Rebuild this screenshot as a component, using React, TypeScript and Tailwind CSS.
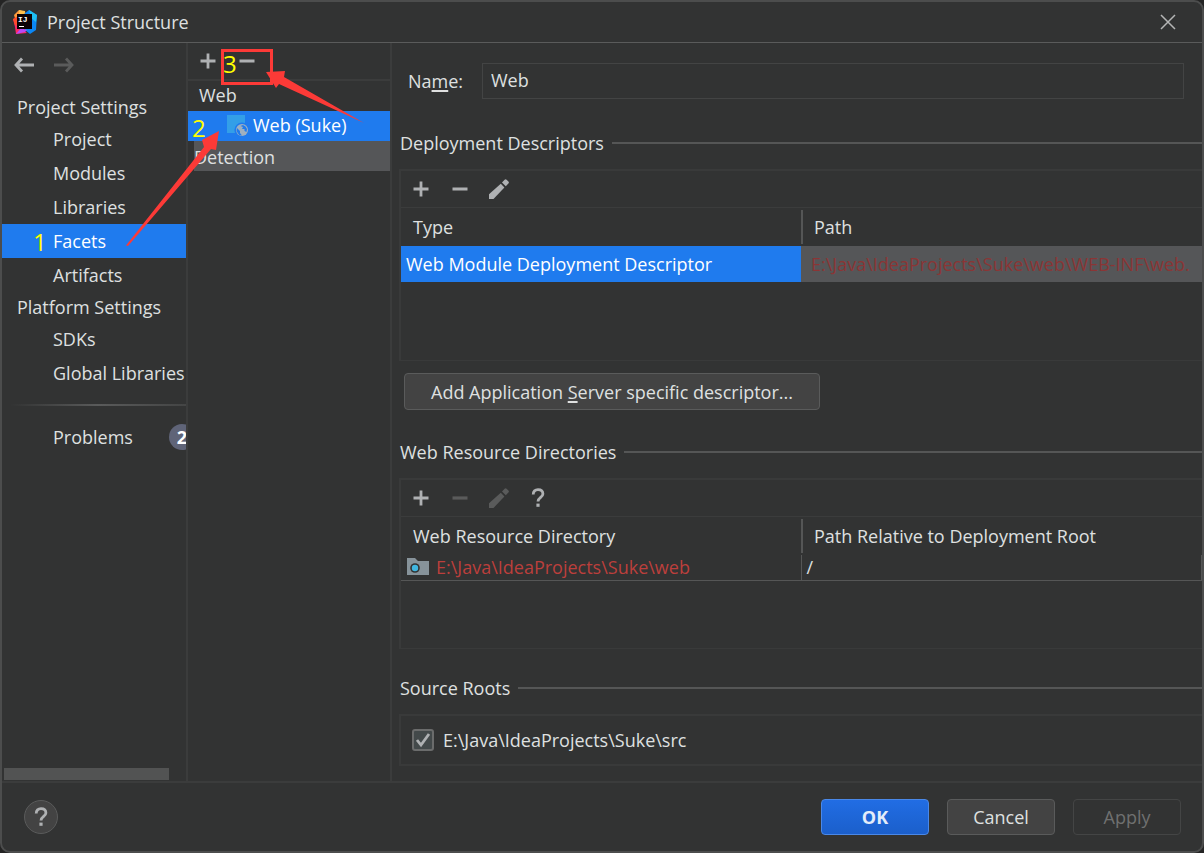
import { useState } from "react";
import type { ReactNode } from "react";

interface NavItem {
    id: string;
    label: string;
}

const PROJECT_SETTINGS: NavItem[] = [
    { id: "project", label: "Project" },
    { id: "modules", label: "Modules" },
    { id: "libraries", label: "Libraries" },
    { id: "facets", label: "Facets" },
    { id: "artifacts", label: "Artifacts" },
];

const PLATFORM_SETTINGS: NavItem[] = [
    { id: "sdks", label: "SDKs" },
    { id: "global-libraries", label: "Global Libraries" },
];

/* ---------- icons ---------- */

function IdeaLogo() {
    return (
        <svg viewBox="0 0 24 24" className="w-6 h-6 shrink-0" aria-hidden="true">
            <polygon points="1,5 6,0 12,2 11,14 3,12" fill="#ff9a3c" />
            <polygon points="6,0 12,1 13,8 6,9" fill="#fdc04e" />
            <polygon points="0,9 6,8 8,18 14,23 3,24 2,17" fill="#fe2868" />
            <polygon points="0,9 5,6 6,16 2,15" fill="#ff4b2b" />
            <polygon points="11,4 16,0 24,5 23,20 17,24 12,20" fill="#0b87f5" />
            <polygon points="16,0 24,5 23,12 18,8" fill="#1ec0f2" />
            <polygon points="3,24 8,18 14,20 12,22" fill="#b74af7" />
            <rect x="4" y="4" width="15" height="15" fill="#0a0206" />
            <text x="5" y="12" fontSize="8" fontWeight="bold" fontFamily="Liberation Mono, monospace" fill="#fff">
                IJ
            </text>
            <rect x="6" y="16" width="5" height="1" fill="#fff" />
        </svg>
    );
}

function ArrowIcon({ flipped = false }: { flipped?: boolean }) {
    return (
        <svg viewBox="0 0 20 16" className={flipped ? "w-5 h-4 -scale-x-100" : "w-5 h-4"} aria-hidden="true">
            <path d="M8 1.5 2 8l6 6.500M2 8h18" fill="none" stroke="currentColor" strokeWidth="2.8" />
        </svg>
    );
}

function PlusIcon() {
    return (
        <svg viewBox="0 0 16 16" className="w-4 h-4" aria-hidden="true">
            <path d="M8 0.500v15M0.500 8h15" stroke="currentColor" strokeWidth="2.800" />
        </svg>
    );
}

function MinusIcon() {
    return (
        <svg viewBox="0 0 16 16" className="w-4 h-4" aria-hidden="true">
            <path d="M0.500 8h15" stroke="currentColor" strokeWidth="3.200" />
        </svg>
    );
}

function PencilIcon() {
    return (
        <svg viewBox="0 0 20 20" className="w-5 h-5" fill="currentColor" aria-hidden="true">
            <path d="M0 15.200 11.800 4.800l3.600 3.600L4.500 20H0z" />
            <path d="m13 3.600 2.600-2.800q1-1 2 0l1.800 1.800q1 1 0 2l-2.600 2.600z" />
        </svg>
    );
}

function QuestionIcon() {
    return (
        <svg viewBox="0 0 14 20" className="w-[14px] h-5" aria-hidden="true">
            <path
                d="M2.200 6.400C2.200 3.200 4.200 1.700 7 1.700s4.900 1.500 4.900 4.200c0 3.300-4.900 3.600-4.900 7.600"
                fill="none"
                stroke="currentColor"
                strokeWidth="2.800"
            />
            <rect x="5.400" y="15.600" width="3.200" height="3.200" fill="currentColor" />
        </svg>
    );
}

function WebFacetIcon() {
    return (
        <svg viewBox="0 0 22 22" className="w-[22px] h-[22px] shrink-0" aria-hidden="true">
            <rect y="1" width="18" height="18" fill="#339fe8" />
            <circle cx="15" cy="16" r="7.600" fill="#1f7bee" />
            <circle cx="15" cy="16" r="6" fill="#9fb0bf" />
            <path d="m10 14 3 3v2l2 2.500-3-.5-2.500-4zM13.500 12l2.500 1-1 2h2.500v2l2 1 .5-3-1.500-2.500-2.500-1.500z" fill="#1f7bee" />
        </svg>
    );
}

function WebFolderIcon() {
    return (
        <svg viewBox="0 0 22 18" className="w-[22px] h-[18px] shrink-0" aria-hidden="true">
            <path d="M0 0h8l3 3h11v14H0z" fill="#87939a" />
            <circle cx="8" cy="10" r="4.800" fill="#323333" />
            <circle cx="8" cy="10" r="3.200" fill="#40b6e0" />
        </svg>
    );
}

/* ---------- building blocks ---------- */

interface ToolButtonProps {
    label: string;
    disabled?: boolean;
    children: ReactNode;
}

function ToolButton({ label, disabled, children }: ToolButtonProps) {
    return (
        <button
            type="button"
            aria-label={label}
            disabled={disabled}
            className="flex items-center justify-center w-5 h-5 text-[#afb1b3] disabled:text-[#5a5b5b]"
        >
            {children}
        </button>
    );
}

function NavGroup({ title, items, active, onSelect }: {
    title: string;
    items: NavItem[];
    active: string;
    onSelect: (id: string) => void;
}) {
    return (
        <section>
            <h2 className="h-[30px] pl-[15px] leading-[30px] whitespace-nowrap">{title}</h2>
            {items.map((item) => (
                <button
                    key={item.id}
                    type="button"
                    onClick={() => onSelect(item.id)}
                    className={
                        item.id === active
                            ? "block w-full h-[34px] pl-[51px] text-left whitespace-nowrap bg-[#1f7bee] text-white"
                            : "block w-full h-[34px] pl-[51px] text-left whitespace-nowrap"
                    }
                >
                    {item.label}
                </button>
            ))}
        </section>
    );
}

function SectionTitle({ children }: { children: ReactNode }) {
    return (
        <div className="flex items-center gap-2 h-[26px] pl-px">
            <h2 className="whitespace-nowrap">{children}</h2>
            <span className="flex-1 h-[2px] bg-[#555656]" />
        </div>
    );
}

function HeaderCell({ divided, children }: { divided?: boolean; children: ReactNode }) {
    return (
        <th scope="col" className={divided ? "h-[38px] p-0 text-left font-normal whitespace-nowrap" : "w-[400px] h-[38px] p-0 text-left font-normal whitespace-nowrap"}>
            <div className={divided ? "h-[34px] pl-[11px] leading-[34px] border-l-2 border-[#555656]" : "pl-3"}>
                {children}
            </div>
        </th>
    );
}

function FacetTree() {
    return (
        <div className="w-[204px] shrink-0 border-r-2 border-[#3b3c3c]">
            <div className="flex items-center gap-[19px] h-[38px] pl-[10px] border-b-2 border-[#3b3c3c]">
                <ToolButton label="Add facet"><PlusIcon /></ToolButton>
                <ToolButton label="Remove facet"><MinusIcon /></ToolButton>
            </div>
            <button type="button" className="block w-full h-[30px] pl-[11px] pb-[2px] text-left">Web</button>
            <button type="button" className="flex items-center gap-1 w-full h-[30px] pl-[39px] pb-[2px] bg-[#1f7bee] text-white">
                <WebFacetIcon />
                <span>Web (Suke)</span>
            </button>
            <div className="pl-[6px]">
                <button type="button" className="block w-full h-[30px] pt-[2px] text-left bg-[#555658]">Detection</button>
            </div>
        </div>
    );
}

/* Numbered steps and arrows drawn on top of the dialog */
function Annotations() {
    return (
        <div className="absolute -inset-[2px] pointer-events-none text-2xl leading-6 text-[#ffff00]">
            <span className="absolute left-[33px] top-[230px]">1</span>
            <span className="absolute left-[192px] top-[116px]">2</span>
            <span className="absolute left-[223px] top-[52px]">3</span>
            <div className="absolute left-[221px] top-[49px] w-[52px] h-9 border-3 border-[#fc3a37]" />
            <svg className="absolute left-0 top-0 w-[400px] h-[260px]" viewBox="0 0 400 260" fill="#fc3a37" aria-hidden="true">
                <path d="M126 245.500 204 147l-2-7 17-9-3 19-5-1-83 97z" />
                <path d="M266 72l19-1-1 6 80 46-85-39-3 4z" />
            </svg>
        </div>
    );
}

export default function App() {
    const [page, setPage] = useState("facets");
    const [name, setName] = useState("Web");
    const [srcRoot, setSrcRoot] = useState(true);

    return (
        <div className="min-h-screen flex bg-[#242424] font-['Open_Sans','Noto_Sans',sans-serif] text-[18px] leading-6 text-[#dfe0e0]">
            <div className="relative flex flex-col flex-1 min-w-0 border-2 border-[#4c4d4d] rounded-[10px] bg-[#323333] overflow-hidden">
                <header className="flex items-center gap-[10px] h-[41px] pl-[11px] pr-6 pb-px border-b border-[#5a5b5b]">
                    <IdeaLogo />
                    <h1 className="flex-1">Project Structure</h1>
                    <button type="button" aria-label="Close" className="text-[#b4b5b5]">
                        <svg viewBox="0 0 20 20" className="w-5 h-5" aria-hidden="true">
                            <path d="m3 3 14 14M17 3 3 17" stroke="currentColor" strokeWidth="1.500" />
                        </svg>
                    </button>
                </header>

                <div className="flex flex-1 min-h-0 border-b-2 border-[#3b3c3c]">
                    <nav className="flex flex-col w-[186px] shrink-0 overflow-hidden border-r-2 border-[#3b3c3c]">
                        <div className="flex items-center gap-5 h-[49px] pl-3 pb-[6px]">
                            <ToolButton label="Back"><ArrowIcon /></ToolButton>
                            <ToolButton label="Forward" disabled><ArrowIcon flipped /></ToolButton>
                        </div>
                        <NavGroup title="Project Settings" items={PROJECT_SETTINGS} active={page} onSelect={setPage} />
                        <NavGroup title="Platform Settings" items={PLATFORM_SETTINGS} active={page} onSelect={setPage} />
                        <div className="h-[2px] my-[14px] ml-2 bg-linear-to-r from-transparent via-[#5a5b5b] to-[#444545]" />
                        <button type="button" className="flex items-center w-[210px] h-[34px] pl-[51px]">
                            <span className="w-[116px] text-left">Problems</span>
                            <span className="w-[26px] h-[26px] shrink-0 rounded-full bg-[#5f6478] text-center leading-[26px] font-bold text-white">
                                2
                            </span>
                        </button>
                        <div className="mt-auto ml-[2px] mb-px w-[165px] h-3 bg-[#525353]" />
                    </nav>

                    <FacetTree />

                    <main className="flex-1 min-w-0 pl-[7px] pt-5 pb-3 overflow-hidden">
                        <div className="flex items-center h-9 pl-[9px] pr-[18px]">
                            <label htmlFor="facet-name" className="w-[74px] shrink-0">
                                Na<u className="underline-offset-2 decoration-2">m</u>e:
                            </label>
                            <input
                                id="facet-name"
                                value={name}
                                onChange={(e) => setName(e.target.value)}
                                className="flex-1 min-w-0 h-9 px-2 pb-[2px] bg-transparent border border-[#434444] outline-none"
                            />
                        </div>

                        <div className="mt-[31px]">
                            <SectionTitle>Deployment Descriptors</SectionTitle>
                        </div>
                        <div className="mt-[13px] h-[192px] border-2 border-r-0 border-b border-[#393a3a]">
                            <div className="flex items-center gap-[19px] h-[37px] pl-[10px] border-b border-[#3b3c3c]">
                                <ToolButton label="Add descriptor"><PlusIcon /></ToolButton>
                                <ToolButton label="Remove descriptor"><MinusIcon /></ToolButton>
                                <ToolButton label="Edit descriptor"><PencilIcon /></ToolButton>
                            </div>
                            <table className="w-full table-fixed border-collapse">
                                <thead>
                                    <tr>
                                        <HeaderCell>Type</HeaderCell>
                                        <HeaderCell divided>Path</HeaderCell>
                                    </tr>
                                </thead>
                                <tbody>
                                    <tr className="h-9 bg-[#555658]">
                                        <td className="p-0 pl-[5px] bg-[#1f7bee] text-white whitespace-nowrap">
                                            Web Module Deployment Descriptor
                                        </td>
                                        <td className="p-0 pl-[10px] text-[#8b3535] whitespace-nowrap">
                                            E:\Java\IdeaProjects\Suke\web\WEB-INF\web.
                                        </td>
                                    </tr>
                                </tbody>
                            </table>
                        </div>

                        <button
                            type="button"
                            className="block mt-3 ml-[5px] w-[416px] h-[37px] rounded-[4px] border border-[#5a5b5b] bg-[#434343] whitespace-nowrap"
                        >
                            Add Application <u className="underline-offset-2 decoration-2">S</u>erver specific descriptor...
                        </button>

                        <div className="mt-[29px]">
                            <SectionTitle>Web Resource Directories</SectionTitle>
                        </div>
                        <div className="mt-[13px] h-[171px] border-2 border-r-0 border-b border-[#393a3a]">
                            <div className="flex items-center gap-[19px] h-[37px] pl-[10px] border-b border-[#3b3c3c]">
                                <ToolButton label="Add directory"><PlusIcon /></ToolButton>
                                <ToolButton label="Remove directory" disabled><MinusIcon /></ToolButton>
                                <ToolButton label="Edit directory" disabled><PencilIcon /></ToolButton>
                                <ToolButton label="Help on directories"><QuestionIcon /></ToolButton>
                            </div>
                            <table className="w-full table-fixed border-collapse">
                                <thead>
                                    <tr>
                                        <HeaderCell>Web Resource Directory</HeaderCell>
                                        <HeaderCell divided>Path Relative to Deployment Root</HeaderCell>
                                    </tr>
                                </thead>
                                <tbody>
                                    <tr className="h-[25px] border-b border-[#555656]">
                                        <td className="p-0 pl-[6px] text-[#bc3f3c] whitespace-nowrap">
                                            <div className="flex items-center gap-[7px]">
                                                <WebFolderIcon />
                                                E:\Java\IdeaProjects\Suke\web
                                            </div>
                                        </td>
                                        <td className="p-0 pl-[5px] border-x border-[#555656]">/</td>
                                    </tr>
                                </tbody>
                            </table>
                        </div>

                        <div className="mt-[26px]">
                            <SectionTitle>Source Roots</SectionTitle>
                        </div>
                        <div className="mt-[13px] h-[52px] flex items-center border-2 border-r-0 border-[#393a3a]">
                            <label className="flex items-center gap-[9px] pl-[11px]">
                                <span className="relative flex w-[22px] h-[22px]">
                                    <input
                                        type="checkbox"
                                        checked={srcRoot}
                                        onChange={(e) => setSrcRoot(e.target.checked)}
                                        className="appearance-none w-[22px] h-[22px] rounded-[3px] border-2 border-[#6b6c6c] bg-[#43494a]"
                                    />
                                    {srcRoot && (
                                        <svg viewBox="0 0 22 22" className="absolute inset-0 pointer-events-none" aria-hidden="true">
                                            <path d="m5 11 4 5 8-11" fill="none" stroke="#afb1b3" strokeWidth="2.800" />
                                        </svg>
                                    )}
                                </span>
                                E:\Java\IdeaProjects\Suke\src
                            </label>
                        </div>
                    </main>
                </div>

                <footer className="flex items-center gap-[18px] h-[68px] pl-[22px] pr-[21px]">
                    <button
                        type="button"
                        aria-label="Help"
                        className="flex items-center justify-center w-[34px] h-[34px] mr-auto rounded-full border border-[#5a5b5b] bg-[#434343] text-[#afb1b3]"
                    >
                        <QuestionIcon />
                    </button>
                    <button
                        type="button"
                        className="w-[108px] h-9 rounded-[4px] border border-[#4a88e8] bg-linear-to-b from-[#216de4] to-[#1b5fcb] font-bold text-[#e3ecfa]"
                    >
                        OK
                    </button>
                    <button type="button" className="w-[108px] h-9 rounded-[4px] border border-[#5a5b5b] bg-[#434343]">
                        Cancel
                    </button>
                    <button type="button" disabled className="w-[108px] h-9 rounded-[4px] border border-[#444545] text-[#6f7070]">
                        Apply
                    </button>
                </footer>

                <Annotations />
            </div>
        </div>
    );
}
